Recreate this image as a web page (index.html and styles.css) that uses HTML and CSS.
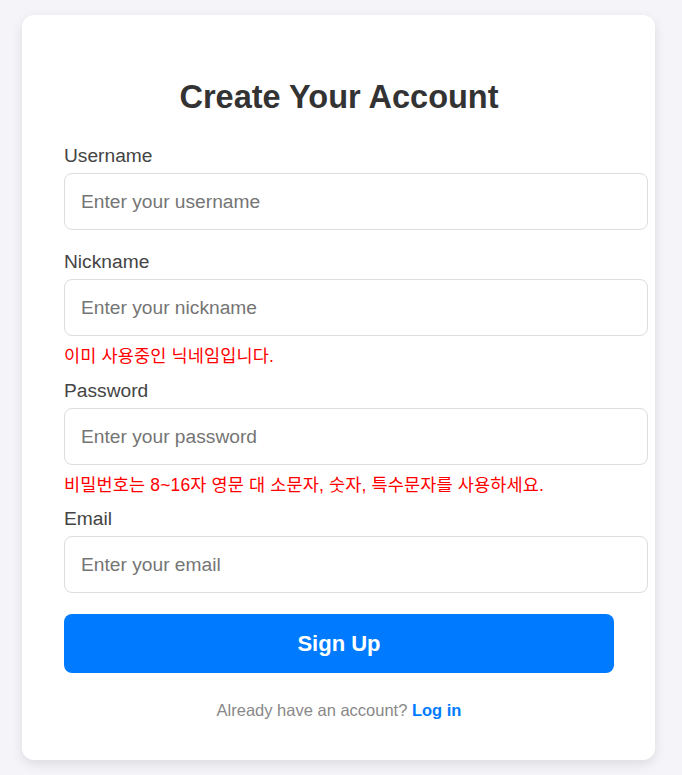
FILE: index.html
```html
<!DOCTYPE html>
<html lang="ko">
<head>
    <meta charset="UTF-8">
    <meta name="viewport" content="width=device-width, initial-scale=1.0">
    <title>Sign Up</title>
    <link rel="stylesheet" href="styles.css">
</head>
<body>
    <div class="container">
        <h1>Create Your Account</h1>
        <form class="signup-form" onsubmit="return false;">
            <div class="form-group">
                <label for="username">Username</label>
                <input type="text" id="username" placeholder="Enter your username">
            </div>
            <div class="form-group has-error">
                <label for="nickname">Nickname</label>
                <input type="text" id="nickname" placeholder="Enter your nickname">
                <p class="error">이미 사용중인 닉네임입니다.</p>
            </div>
            <div class="form-group has-error">
                <label for="password">Password</label>
                <input type="password" id="password" placeholder="Enter your password">
                <p class="error">비밀번호는 8~16자 영문 대 소문자, 숫자, 특수문자를 사용하세요.</p>
            </div>
            <div class="form-group">
                <label for="email">Email</label>
                <input type="email" id="email" placeholder="Enter your email">
            </div>
            <button type="submit" class="submit-btn">Sign Up</button>
        </form>
        <p class="login-link">Already have an account? <a href="#">Log in</a></p>
    </div>
</body>
</html>
```

FILE: styles.css
```css
body {
    font-family: "Liberation Sans", Arial, "Noto Sans CJK KR", sans-serif;
    background-color: #f4f4f9;
    margin: 0;
    padding: 15px 22px;
}

.container {
    width: 633px;
    box-sizing: border-box;
    background: #fff;
    padding: 40px 41px 40px 42px;
    border-radius: 12px;
    box-shadow: 0 4px 12px rgba(0, 0, 0, 0.1);
}

h1 {
    margin: 24px 0 29px;
    font-size: 32.5px;
    line-height: 37px;
    font-weight: bold;
    color: #333;
    text-align: center;
}

.form-group {
    margin-bottom: 21px;
}

.form-group.has-error {
    margin-bottom: 13.5px;
}

.form-group label {
    display: block;
    margin-bottom: 6px;
    font-size: 19.2px;
    line-height: 22px;
    color: #444;
}

.form-group input {
    width: 100%;
    padding: 16px;
    border: 1px solid #ddd;
    border-radius: 8px;
    font-family: "Liberation Sans", Arial, sans-serif;
    font-size: 19.2px;
    line-height: 23px;
    height: 23px;
    color: #333;
    outline: none;
}

.form-group input::placeholder {
    color: #757575;
}

.error {
    margin: 10px 0 0;
    font-family: "Liberation Sans", Arial, "Noto Sans CJK KR", sans-serif;
    font-size: 17.5px;
    line-height: 20px;
    letter-spacing: 0.15px;
    color: #ff0000;
}

.submit-btn {
    display: block;
    width: 100%;
    height: 59px;
    margin-top: 21px;
    padding: 0;
    border: none;
    border-radius: 8px;
    background-color: #007bff;
    color: #fff;
    font-family: "Liberation Sans", Arial, sans-serif;
    font-size: 22px;
    font-weight: bold;
    line-height: 59px;
    cursor: pointer;
}

.submit-btn:hover {
    background-color: #0069d9;
}

.login-link {
    margin: 28px 0 0;
    font-size: 16.5px;
    color: #888;
    text-align: center;
}

.login-link a {
    color: #007bff;
    font-weight: bold;
    text-decoration: none;
}
```
